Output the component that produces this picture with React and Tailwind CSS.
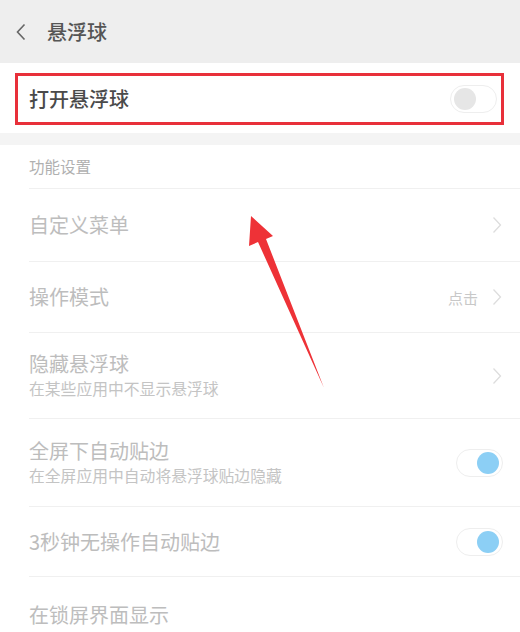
import React from 'react';

function Toggle({ on }) {
  return (
    <div className={`flex h-[28px] w-[47px] items-center rounded-full border border-[#eeeeee] bg-white px-[3px] ${on ? 'justify-end' : 'justify-start'}`}>
      <div className={`h-[22px] w-[22px] rounded-full ${on ? 'bg-[#8ccff5]' : 'bg-[#e6e6e6]'}`} />
    </div>
  );
}

function Chevron({ className = '' }) {
  return (
    <svg width="10" height="18" viewBox="0 0 10 18" className={className}>
      <path d="M1.5 1.5 L8.5 9 L1.5 16.5" fill="none" stroke="currentColor" strokeWidth="1.3" />
    </svg>
  );
}

function Row({ title, sub, right, height }) {
  return (
    <div className={`flex items-center border-b border-[#f0f0f0] pr-[18px] ${height}`}>
      <div className="flex flex-1 flex-col gap-[7px]">
        <span className="text-[20px] leading-none text-[#bdbdbd]">{title}</span>
        {sub && <span className="text-[15.8px] leading-none text-[#c4c4c4]">{sub}</span>}
      </div>
      {right}
    </div>
  );
}

export default function App() {
  return (
    <div className="relative h-[632px] w-[520px] overflow-hidden bg-white font-['Noto_Sans_CJK_SC',sans-serif]">
      <div className="flex h-[63px] items-center bg-[#eeeeee] pl-[15px]">
        <svg width="12" height="18" viewBox="0 0 12 18" className="text-[#666]">
          <path d="M9.5 1.5 L2.5 9 L9.5 16.5" fill="none" stroke="currentColor" strokeWidth="1.6" />
        </svg>
        <span className="ml-[20px] text-[20px] font-medium leading-none text-[#555]">悬浮球</span>
      </div>

      <div className="h-[70px] pl-[15px] pr-[16px] pt-[10px]">
        <div className="flex h-[52px] items-center justify-between border-[3px] border-[#e8303a] pl-[11px] pr-[4px]">
          <span className="text-[20px] font-medium leading-none text-[#4a4a4a]">打开悬浮球</span>
          <Toggle on={false} />
        </div>
      </div>

      <div className="h-[12px] bg-[#f4f4f4]" />

      <div className="pl-[29px]">
        <div className="flex h-[44px] items-center border-b border-[#f0f0f0]">
          <span className="text-[15.5px] leading-none text-[#b0b0b0]">功能设置</span>
        </div>
        <Row title="自定义菜单" height="h-[73px]" right={<Chevron className="text-[#dddddd]" />} />
        <Row
          title="操作模式"
          height="h-[71px]"
          right={
            <div className="flex items-center gap-[14px]">
              <span className="text-[15px] leading-none text-[#c8c8c8]">点击</span>
              <Chevron className="text-[#dddddd]" />
            </div>
          }
        />
        <Row title="隐藏悬浮球" sub="在某些应用中不显示悬浮球" height="h-[86px]" right={<Chevron className="text-[#dddddd]" />} />
        <Row title="全屏下自动贴边" sub="在全屏应用中自动将悬浮球贴边隐藏" height="h-[88px]" right={<div className="-mr-[1px]"><Toggle on /></div>} />
        <Row title="3秒钟无操作自动贴边" height="h-[70px]" right={<div className="-mr-[1px]"><Toggle on /></div>} />
        <Row title="在锁屏界面显示" height="h-[76px]" />
      </div>

      <svg className="absolute left-0 top-0" width="520" height="632" viewBox="0 0 520 632">
        <polygon points="251,216 273,236 266,239 324,388 258,242 249,246" fill="#ee3237" />
      </svg>
    </div>
  );
}
